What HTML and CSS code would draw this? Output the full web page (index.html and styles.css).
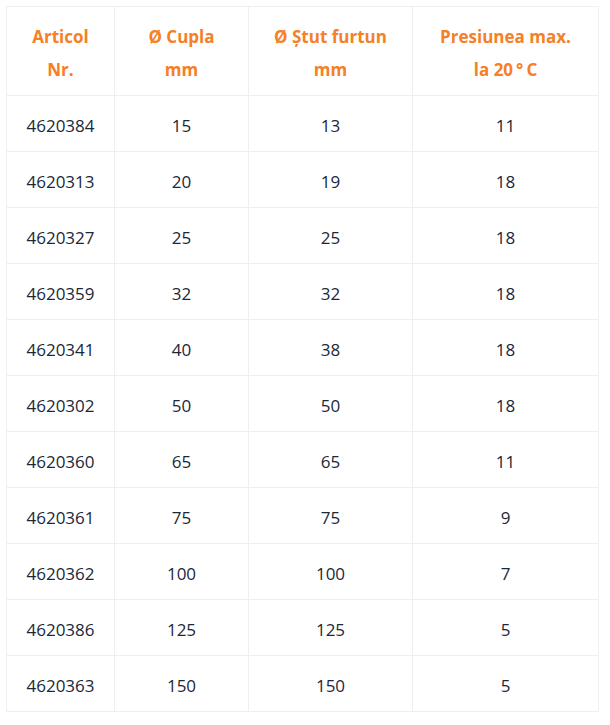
FILE: index.html
```html
<!DOCTYPE html>
<html lang="ro">
<head>
<meta charset="utf-8">
<title>Tabel cuple</title>
<link rel="stylesheet" href="styles.css">
</head>
<body>
<div class="wrap">
<table class="spec">
<colgroup>
<col class="c1"><col class="c2"><col class="c3"><col class="c4">
</colgroup>
<thead>
<tr><th>Articol<br>Nr.</th><th>Ø Cupla<br>mm</th><th>Ø Ștut furtun<br>mm</th><th>Presiunea max.<br>la 20<span class="deg">°</span>C</th></tr>
</thead>
<tbody>
<tr><td>4620384</td><td>15</td><td>13</td><td>11</td></tr>
<tr><td>4620313</td><td>20</td><td>19</td><td>18</td></tr>
<tr><td>4620327</td><td>25</td><td>25</td><td>18</td></tr>
<tr><td>4620359</td><td>32</td><td>32</td><td>18</td></tr>
<tr><td>4620341</td><td>40</td><td>38</td><td>18</td></tr>
<tr><td>4620302</td><td>50</td><td>50</td><td>18</td></tr>
<tr><td>4620360</td><td>65</td><td>65</td><td>11</td></tr>
<tr><td>4620361</td><td>75</td><td>75</td><td>9</td></tr>
<tr><td>4620362</td><td>100</td><td>100</td><td>7</td></tr>
<tr><td>4620386</td><td>125</td><td>125</td><td>5</td></tr>
<tr><td>4620363</td><td>150</td><td>150</td><td>5</td></tr>
</tbody>
</table>
</div>
</body>
</html>
```
FILE: styles.css
```css
html, body {
  margin: 0;
  padding: 0;
  background: #ffffff;
}
.wrap {
  padding: 6px;
}
.spec {
  border-collapse: collapse;
  table-layout: fixed;
  width: 592px;
  font-family: "Open Sans", "DejaVu Sans", sans-serif;
  font-size: 17px;
  line-height: 33px;
  color: #1b2838;
}
.c1 { width: 108px; }
.c2 { width: 134px; }
.c3 { width: 164px; }
.c4 { width: 186px; }
.spec th,
.spec td {
  border: 1px solid #efefef;
  padding: 13px 4px 9px;
  text-align: center;
  vertical-align: middle;
}
.spec th {
  color: #f58025;
  font-weight: 700;
}
.spec td {
  font-weight: 400;
}
.deg {
  margin: 0 3px;
}
```
